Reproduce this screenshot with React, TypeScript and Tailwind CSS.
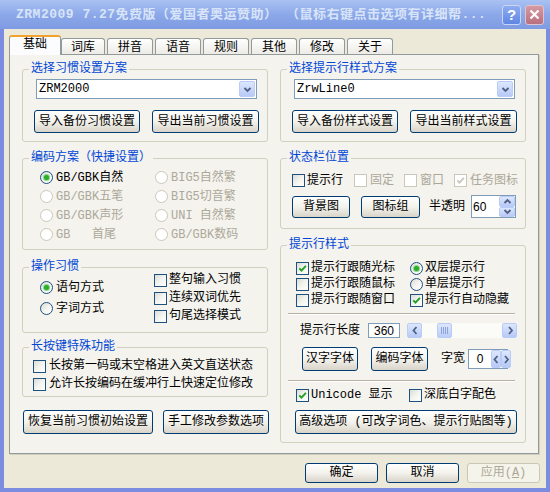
import React from 'react'

function Check({ checked = false, disabled = false }: { checked?: boolean; disabled?: boolean }) {
  return (
    <span
      className={`flex h-[13px] w-[13px] shrink-0 items-center justify-center border ${
        disabled
          ? 'border-[#CAC8BB] bg-white'
          : 'border-[#1C5180] bg-gradient-to-br from-[#DCDCD7] via-[#F3F3EF] to-white'
      }`}
    >
      {checked && (
        <svg width="9" height="9" viewBox="0 0 9 9">
          <path
            d="M1.3 4.3 L3.5 6.6 L7.9 1.9"
            fill="none"
            stroke={disabled ? '#CAC8BB' : '#21A121'}
            strokeWidth="1.9"
          />
        </svg>
      )}
    </span>
  )
}

function Radio({ checked = false, disabled = false }: { checked?: boolean; disabled?: boolean }) {
  return (
    <span
      className={`flex h-[13px] w-[13px] shrink-0 items-center justify-center rounded-full border ${
        disabled
          ? 'border-[#CAC8BB] bg-white'
          : 'border-[#1C5180] bg-gradient-to-br from-[#DCDCD7] via-[#F3F3EF] to-white'
      }`}
    >
      {checked && <span className="h-[5px] w-[5px] rounded-full bg-[#2AAE2A] shadow-[0_0_0_1px_#8CD88C]" />}
    </span>
  )
}

function Btn({
  children,
  className = '',
  disabled = false,
}: {
  children: React.ReactNode
  className?: string
  disabled?: boolean
}) {
  return (
    <div
      className={`flex shrink-0 items-center justify-center whitespace-nowrap rounded-[3px] border ${
        disabled
          ? 'border-[#C9C7BA] bg-[#F5F4EA] text-[#ACA899]'
          : 'border-[#003C74] bg-gradient-to-b from-white via-[#F3F2EC] to-[#D9D4C9]'
      } ${className}`}
    >
      {children}
    </div>
  )
}

function Group({
  title,
  className = '',
  children,
}: {
  title: string
  className?: string
  children: React.ReactNode
}) {
  return (
    <fieldset className={`rounded-[3px] border border-[#D0D0BF] ${className}`}>
      <legend className="ml-[6px] px-[2px] text-[#0046D5]">{title}</legend>
      {children}
    </fieldset>
  )
}

// small blue xp arrow button
function Arrow({ dir, className = '' }: { dir: 'up' | 'down' | 'left' | 'right'; className?: string }) {
  const d = {
    up: 'M1.5 5 L4.5 2 L7.5 5',
    down: 'M1.5 2 L4.5 5 L7.5 2',
    left: 'M5.5 1 L2.5 4.5 L5.5 8',
    right: 'M3 1 L6 4.5 L3 8',
  }[dir]
  const horiz = dir === 'left' || dir === 'right'
  return (
    <span
      className={`flex items-center justify-center rounded-[2px] border border-[#B9CCF8] bg-gradient-to-b from-[#DDE7FD] to-[#B7C9F6] ${className}`}
    >
      <svg width={horiz ? 8 : 9} height={horiz ? 9 : 7} viewBox={horiz ? '0 0 8 9' : '0 0 9 7'}>
        <path d={d} fill="none" stroke="#4D6185" strokeWidth="1.8" />
      </svg>
    </span>
  )
}

function Combo({ value }: { value: string }) {
  return (
    <div className="flex h-[20px] w-[221px] items-center border border-[#7F9DB9] bg-white pl-[2px]">
      <span className="flex-1">{value}</span>
      <Arrow dir="down" className="mr-[1px] h-[16px] w-[16px]" />
    </div>
  )
}

function Item({
  children,
  className = '',
  disabled = false,
}: {
  children: React.ReactNode
  className?: string
  disabled?: boolean
}) {
  return (
    <div className={`flex items-center whitespace-pre ${disabled ? 'text-[#ACA899]' : ''} ${className}`}>
      {children}
    </div>
  )
}

export default function App() {
  return (
    <div className="flex h-[492px] w-[550px] flex-col overflow-hidden bg-[#ECE9D8] font-['Liberation_Mono','Noto_Sans_CJK_SC',monospace] text-[12px] leading-[14px] text-black">
      {/* Title bar */}
      <div className="flex h-[29px] shrink-0 items-center bg-gradient-to-b from-[#A9C1F2] via-[#8CA8E9] to-[#7E9BE3] pl-[16px] pr-[6px]">
        <div className="flex-1 overflow-hidden whitespace-nowrap text-[13px] font-bold tracking-[0.5px] text-[#D8E4F8]">
          ZRM2009 7.27免费版（爱国者奥运赞助） （鼠标右键点击选项有详细帮...
        </div>
        <div className="ml-[6px] flex gap-[4px]">
          <div className="flex h-[20px] w-[19px] items-center justify-center rounded-[3px] border border-[#C9D6F6] bg-gradient-to-b from-[#8FACF0] to-[#5F86E4] font-['Liberation_Sans',sans-serif] text-[15px] font-bold text-white">
            ?
          </div>
          <div className="flex h-[20px] w-[19px] items-center justify-center rounded-[3px] border border-[#E2C3CB] bg-gradient-to-b from-[#D59AA4] to-[#B86F7E]">
            <svg width="11" height="11" viewBox="0 0 11 11">
              <path d="M1.5 1.5 L9.5 9.5 M9.5 1.5 L1.5 9.5" stroke="white" strokeWidth="2.2" />
            </svg>
          </div>
        </div>
      </div>

      {/* Window body */}
      <div className="flex flex-1 flex-col border-x-4 border-b-4 border-[#7B8CE1]">
        {/* Tabs */}
        <div className="mt-[6px] flex items-end pl-[5px]">
          <div className="relative z-10 -mb-[1px] flex h-[20px] w-[52px] items-center justify-center rounded-t-[3px] border-x border-t-2 border-x-[#919B9C] border-t-[#F0A22E] bg-[#FCFCFE] pb-[2px]">
            基础
          </div>
          {['词库', '拼音', '语音', '规则', '其他', '修改', '关于'].map((t, i) => (
            <div
              key={t}
              className={`flex h-[16px] items-center justify-center rounded-t-[3px] border-x border-t border-[#919B9C] bg-gradient-to-b from-white to-[#ECEBE6] pt-[2px] ${
                i === 0 ? 'w-[44px]' : 'ml-[2px] w-[46px]'
              }`}
            >
              {t}
            </div>
          ))}
        </div>

        {/* Tab page */}
        <div className="ml-[5px] h-[400px] w-[530px] border border-[#919B9C] bg-[#F4F3EE] shadow-[1px_1px_0_#D0CEBF]">
          <div className="flex gap-[12px] pl-[12px] pt-[7px]">
            {/* Left column */}
            <div className="flex w-[246px] flex-col">
              <Group title="选择习惯设置方案" className="h-[80px]">
                <div className="pl-[13px] pt-[3px]">
                  <Combo value="ZRM2000" />
                </div>
                <div className="mt-[11px] flex gap-[12px] pl-[11px]">
                  <Btn className="h-[23px] w-[106px]">导入备份习惯设置</Btn>
                  <Btn className="h-[23px] w-[107px]">导出当前习惯设置</Btn>
                </div>
              </Group>

              <Group title="编码方案（快捷设置）" className="mt-[9px] h-[99px]">
                <div className="grid grid-cols-[115px_1fr] pl-[17px] pt-[3px]">
                  <Item className="h-[19px] gap-[3px]">
                    <Radio checked />
                    GB/GBK自然
                  </Item>
                  <Item className="h-[19px] gap-[3px]" disabled>
                    <Radio disabled />
                    BIG5自然繁
                  </Item>
                  <Item className="h-[19px] gap-[3px]" disabled>
                    <Radio disabled />
                    GB/GBK五笔
                  </Item>
                  <Item className="h-[19px] gap-[3px]" disabled>
                    <Radio disabled />
                    BIG5切音繁
                  </Item>
                  <Item className="h-[19px] gap-[3px]" disabled>
                    <Radio disabled />
                    GB/GBK声形
                  </Item>
                  <Item className="h-[19px] gap-[3px]" disabled>
                    <Radio disabled />
                    UNI 自然繁
                  </Item>
                  <Item className="h-[19px] gap-[3px]" disabled>
                    <Radio disabled />
                    GB   首尾
                  </Item>
                  <Item className="h-[19px] gap-[3px]" disabled>
                    <Radio disabled />
                    GB/GBK数码
                  </Item>
                </div>
              </Group>

              <Group title="操作习惯" className="mt-[10px] h-[73px]">
                <div className="flex pl-[17px]">
                  <div className="w-[114px] pt-[3px]">
                    <Item className="h-[21px] gap-[3px]">
                      <Radio checked />
                      语句方式
                    </Item>
                    <Item className="h-[21px] gap-[3px]">
                      <Radio />
                      字词方式
                    </Item>
                  </div>
                  <div className="-mt-[3px]">
                    <Item className="h-[18px] gap-[2px]">
                      <Check />
                      整句输入习惯
                    </Item>
                    <Item className="h-[18px] gap-[2px]">
                      <Check />
                      连续双词优先
                    </Item>
                    <Item className="h-[18px] gap-[2px]">
                      <Check />
                      句尾选择模式
                    </Item>
                  </div>
                </div>
              </Group>

              <Group title="长按键特殊功能" className="mt-[7px] h-[57px]">
                <div className="pl-[10px] pt-[3px]">
                  <Item className="h-[18px] gap-[3px]">
                    <Check />
                    长按第一码或末空格进入英文直送状态
                  </Item>
                  <Item className="h-[18px] gap-[3px]">
                    <Check />
                    允许长按编码在缓冲行上快速定位修改
                  </Item>
                </div>
              </Group>

              <div className="ml-[1px] mt-[13px] flex gap-[10px]">
                <Btn className="h-[24px] w-[130px]">恢复当前习惯初始设置</Btn>
                <Btn className="h-[24px] w-[106px]">手工修改参数选项</Btn>
              </div>
            </div>

            {/* Right column */}
            <div className="flex w-[246px] flex-col">
              <Group title="选择提示行样式方案" className="h-[80px]">
                <div className="pl-[13px] pt-[3px]">
                  <Combo value="ZrwLine0" />
                </div>
                <div className="mt-[11px] flex gap-[12px] pl-[11px]">
                  <Btn className="h-[23px] w-[106px]">导入备份样式设置</Btn>
                  <Btn className="h-[23px] w-[107px]">导出当前样式设置</Btn>
                </div>
              </Group>

              <Group title="状态栏位置" className="mt-[9px] h-[78px]">
                <div className="pl-[11px] pt-[7px]">
                  <div className="flex h-[17px] items-center">
                    <Item className="w-[62px] gap-[2px]">
                      <Check />
                      提示行
                    </Item>
                    <Item className="w-[50px] gap-[3px]" disabled>
                      <Check disabled />
                      固定
                    </Item>
                    <Item className="w-[50px] gap-[3px]" disabled>
                      <Check disabled />
                      窗口
                    </Item>
                    <Item className="gap-[3px]" disabled>
                      <Check checked disabled />
                      任务图标
                    </Item>
                  </div>
                  <div className="mt-[6px] flex h-[23px] items-center">
                    <Btn className="h-[22px] w-[58px]">背景图</Btn>
                    <Btn className="ml-[11px] h-[22px] w-[59px]">图标组</Btn>
                    <span className="ml-[9px]">半透明</span>
                    <div className="ml-[6px] flex h-[23px] w-[45px] items-stretch border border-[#7F9DB9] bg-white">
                      <span className="flex flex-1 items-center pl-[1px] font-['Liberation_Sans',sans-serif]">60</span>
                      <div className="flex w-[16px] flex-col">
                        <Arrow dir="up" className="flex-1" />
                        <Arrow dir="down" className="flex-1" />
                      </div>
                    </div>
                  </div>
                </div>
              </Group>

              <Group title="提示行样式" className="mt-[9px] h-[205px]">
                <div className="pt-[8px]">
                  <div className="grid grid-cols-[114px_1fr] pl-[15px]">
                    <Item className="h-[16px] gap-[2px]">
                      <Check checked />
                      提示行跟随光标
                    </Item>
                    <Item className="h-[16px] gap-[2px]">
                      <Radio checked />
                      双层提示行
                    </Item>
                    <Item className="h-[16px] gap-[2px]">
                      <Check />
                      提示行跟随鼠标
                    </Item>
                    <Item className="h-[16px] gap-[2px]">
                      <Radio />
                      单层提示行
                    </Item>
                    <Item className="h-[16px] gap-[2px]">
                      <Check />
                      提示行跟随窗口
                    </Item>
                    <Item className="h-[16px] gap-[2px]">
                      <Check checked />
                      提示行自动隐藏
                    </Item>
                  </div>

                  <div className="ml-[7px] mt-[5px] w-[227px] border-b border-t border-b-white border-t-[#B5B2A4]" />

                  <div className="mt-[8px] flex h-[15px] items-center pl-[19px]">
                    <span>提示行长度</span>
                    <span className="ml-[8px] flex h-[15px] w-[32px] items-center justify-center border border-[#7F9DB9] bg-white font-['Liberation_Sans',sans-serif]">
                      360
                    </span>
                    <div className="ml-[7px] flex h-[15px] w-[110px] items-stretch bg-[#FBFBF7]">
                      <Arrow dir="left" className="w-[15px]" />
                      <div className="ml-[15px] flex w-[15px] items-center justify-center rounded-[2px] border border-[#B9CCF8] bg-gradient-to-b from-[#DDE7FD] to-[#BCCDF7]">
                        <svg width="7" height="7" viewBox="0 0 7 7">
                          <path d="M0.5 0 V7 M2.5 0 V7 M4.5 0 V7 M6.5 0 V7" stroke="#8DA4DA" strokeWidth="1" />
                        </svg>
                      </div>
                      <div className="flex-1" />
                      <Arrow dir="right" className="w-[15px]" />
                    </div>
                  </div>

                  <div className="mt-[9px] flex h-[24px] items-center pl-[21px]">
                    <Btn className="h-[24px] w-[56px]">汉字字体</Btn>
                    <Btn className="ml-[13px] h-[24px] w-[57px]">编码字体</Btn>
                    <span className="ml-[13px]">字宽</span>
                    <div className="ml-[3px] flex h-[20px] w-[40px] items-stretch border border-[#7F9DB9] bg-white">
                      <span className="flex flex-1 items-center justify-center font-['Liberation_Sans',sans-serif]">0</span>
                      <div className="flex w-[16px]">
                        <Arrow dir="left" className="flex-1" />
                        <Arrow dir="right" className="flex-1" />
                      </div>
                    </div>
                  </div>

                  <div className="ml-[7px] mt-[9px] w-[227px] border-b border-t border-b-white border-t-[#B5B2A4]" />

                  <div className="mt-[6px] grid h-[14px] grid-cols-[113px_1fr] pl-[15px]">
                    <Item className="gap-[2px]">
                      <Check checked />
                      Unicode 显示
                    </Item>
                    <Item className="gap-[2px]">
                      <Check />
                      深底白字配色
                    </Item>
                  </div>

                  <Btn className="ml-[14px] mt-[8px] h-[24px] w-[222px]">高级选项 (可改字词色、提示行贴图等)</Btn>
                </div>
              </Group>
            </div>
          </div>
        </div>

        {/* Dialog buttons */}
        <div className="mt-[9px] flex justify-end gap-[8px] pr-[6px]">
          <Btn className="h-[20px] w-[73px]">确定</Btn>
          <Btn className="h-[20px] w-[73px]">取消</Btn>
          <Btn className="h-[20px] w-[73px]" disabled>
            应用(<span className="underline">A</span>)
          </Btn>
        </div>
      </div>
    </div>
  )
}
